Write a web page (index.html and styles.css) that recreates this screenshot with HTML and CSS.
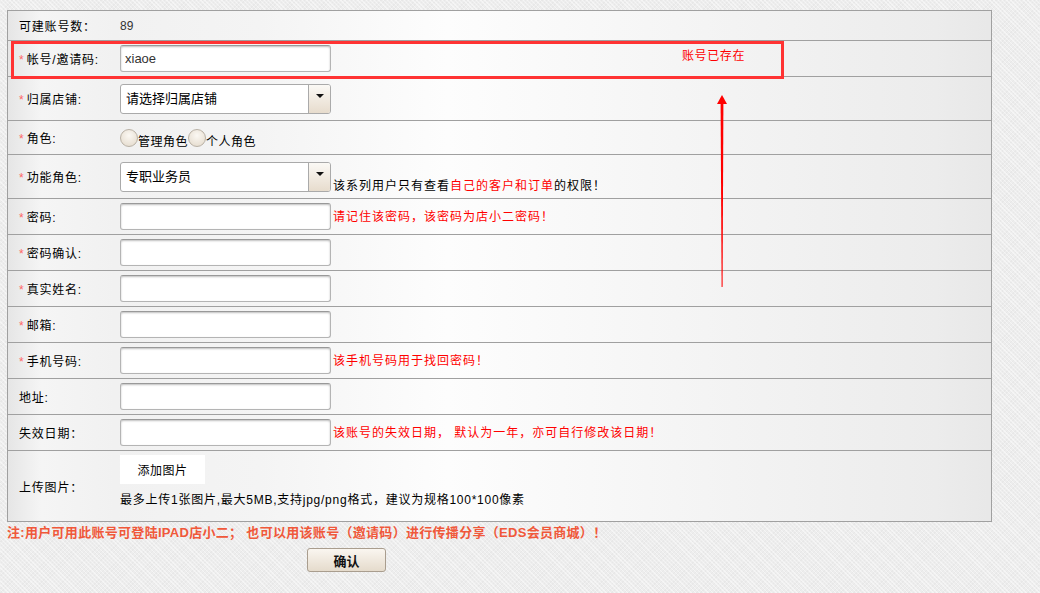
FILE: index.html
```html
<!DOCTYPE html>
<html>
<head>
    <title>新建账号</title>
    <meta charset="UTF-8">
    <link rel="stylesheet" href="styles.css">
</head>
<body>
    <div class="page">
        <table class="form-table">
            <tr class="row-first">
                <td class="label">可建账号数：</td>
                <td class="value"><span class="count">89</span></td>
            </tr>
            <tr class="row-md">
                <td class="label"><i class="req">*</i>帐号/邀请码:</td>
                <td class="value"><input class="text-input" type="text" value="xiaoe"></td>
            </tr>
            <tr class="row-lg">
                <td class="label"><i class="req">*</i>归属店铺:</td>
                <td class="value">
                    <div class="select">
                        <span class="select-text">请选择归属店铺</span>
                        <span class="select-btn"><i class="caret"></i></span>
                    </div>
                </td>
            </tr>
            <tr class="row-sm">
                <td class="label"><i class="req">*</i>角色:</td>
                <td class="value">
                    <div class="radios">
                        <span class="radio"></span><span class="radio-text">管理角色</span>
                        <span class="radio"></span><span class="radio-text">个人角色</span>
                    </div>
                </td>
            </tr>
            <tr class="row-lg">
                <td class="label"><i class="req">*</i>功能角色:</td>
                <td class="value">
                    <div class="field field-end">
                        <div class="select">
                            <span class="select-text">专职业务员</span>
                            <span class="select-btn"><i class="caret"></i></span>
                        </div>
                        <span class="hint hint-dark">该系列用户只有查看<em>自己的客户和订单</em>的权限！</span>
                    </div>
                </td>
            </tr>
            <tr class="row-md">
                <td class="label"><i class="req">*</i>密码:</td>
                <td class="value">
                    <div class="field">
                        <input class="text-input" type="password">
                        <span class="hint">请记住该密码，该密码为店小二密码！</span>
                    </div>
                </td>
            </tr>
            <tr class="row-md">
                <td class="label"><i class="req">*</i>密码确认:</td>
                <td class="value"><input class="text-input" type="password"></td>
            </tr>
            <tr class="row-md">
                <td class="label"><i class="req">*</i>真实姓名:</td>
                <td class="value"><input class="text-input" type="text"></td>
            </tr>
            <tr class="row-md">
                <td class="label"><i class="req">*</i>邮箱:</td>
                <td class="value"><input class="text-input" type="text"></td>
            </tr>
            <tr class="row-md">
                <td class="label"><i class="req">*</i>手机号码:</td>
                <td class="value">
                    <div class="field">
                        <input class="text-input" type="text">
                        <span class="hint">该手机号码用于找回密码！</span>
                    </div>
                </td>
            </tr>
            <tr class="row-md">
                <td class="label">地址:</td>
                <td class="value"><input class="text-input" type="text"></td>
            </tr>
            <tr class="row-md">
                <td class="label">失效日期：</td>
                <td class="value">
                    <div class="field">
                        <input class="text-input" type="text">
                        <span class="hint">该账号的失效日期， 默认为一年，亦可自行修改该日期！</span>
                    </div>
                </td>
            </tr>
            <tr class="row-upload">
                <td class="label">上传图片：</td>
                <td class="value value-top">
                    <button class="btn-add" type="button">添加图片</button>
                    <p class="upload-tip">最多上传1张图片,最大5MB,支持jpg/png格式，建议为规格100*100像素</p>
                </td>
            </tr>
        </table>

        <p class="note">注:用户可用此账号可登陆IPAD店小二； 也可以用该账号（邀请码）进行传播分享（EDS会员商城）！</p>
        <div class="actions">
            <button class="btn-confirm" type="button">确认</button>
        </div>

        <!-- annotation drawn over the form -->
        <div class="mark-box"></div>
        <span class="mark-text">账号已存在</span>
        <svg class="mark-arrow" width="12" height="195" viewBox="0 0 12 195">
            <polygon points="6,1 11,10 1,10" fill="#f00"/>
            <polygon points="4.6,9 7.4,9 6.6,193 5.6,193" fill="#f00"/>
        </svg>
    </div>
</body>
</html>
```

FILE: styles.css
```css
body {
    margin: 0;
    font-family: "Liberation Sans", "Noto Sans CJK SC", sans-serif;
    font-size: 12px;
    color: #000;
    background-color: #ededed;
    background-image:
        repeating-linear-gradient(45deg, rgba(255, 255, 255, 0.45) 0 1px, transparent 1px 3px),
        repeating-linear-gradient(-45deg, rgba(0, 0, 0, 0.025) 0 1px, transparent 1px 3px);
}
.page {
    position: relative;
    padding: 10px 0 26px 7px;
}
.form-table {
    width: 985px;
    border: 1px solid #a0a0a0;
    border-spacing: 0;
}
.form-table td {
    padding: 0;
    border-top: 1px solid #a0a0a0;
    vertical-align: middle;
    background: linear-gradient(to right, #e2e2e2 0, #f5f5f5 4%, #f1f1f1 11%, #f4f4f4 25%, #fdfdfd 43%, #f5f5f5 65%, #ececec 90%, #e4e4e4 100%);
    background-attachment: fixed;
}
.form-table tr:first-child td {
    border-top: none;
}
.row-first td { height: 29px; }
.row-md td { height: 35px; }
.row-lg td { height: 43px; }
.row-sm td { height: 33px; }
.row-upload td { height: 66px; }
.label {
    width: 101px;
    padding-left: 11px !important;
    letter-spacing: 0.8px;
    white-space: nowrap;
}
.req {
    font-style: normal;
    color: #f66;
    margin-right: 3px;
    letter-spacing: 0;
}
.count {
    color: #333;
}
.text-input {
    box-sizing: border-box;
    width: 211px;
    height: 27px;
    margin: 0;
    padding: 0 4px;
    border: 1px solid #b4b4b4;
    border-top-color: #999;
    border-radius: 3px;
    box-shadow: inset 0 1px 2px rgba(0, 0, 0, 0.25);
    background: #fff;
    font-family: "Liberation Sans", "Noto Sans CJK SC", sans-serif;
    font-size: 13px;
    color: #333;
    outline: none;
}
.select {
    box-sizing: border-box;
    display: flex;
    width: 211px;
    height: 30px;
    border: 1px solid #aaa;
    border-radius: 3px;
    background: #fff;
    overflow: hidden;
    flex-shrink: 0;
}
.select-text {
    flex: 1;
    padding: 5px 0 0 5px;
    font-size: 13px;
    line-height: 18px;
}
.select-btn {
    width: 22px;
    border-left: 1px solid #aaa;
    background: linear-gradient(#fbf9f5, #e7dccd);
    display: flex;
    justify-content: center;
    padding-top: 9px;
    box-sizing: border-box;
}
.caret {
    width: 0;
    height: 0;
    border-left: 4px solid transparent;
    border-right: 4px solid transparent;
    border-top: 4px solid #111;
}
.field {
    display: flex;
    align-items: center;
}
.field-end {
    align-items: flex-end;
}
.field-end .hint {
    margin-bottom: -1px;
}
.hint {
    margin-left: 2px;
    color: #f00;
    letter-spacing: 1px;
    line-height: 14px;
    white-space: nowrap;
}
.hint-dark {
    color: #000;
}
.hint em {
    font-style: normal;
    color: #f00;
}
.radios {
    display: flex;
    align-items: flex-end;
    padding-top: 2px;
}
.radio {
    box-sizing: border-box;
    width: 18px;
    height: 18px;
    border: 1px solid #b9b1a5;
    border-radius: 50%;
    background: radial-gradient(circle at 50% 35%, #fbf8f3, #e2d8c9);
    margin-bottom: 2px;
}
.radio-text {
    letter-spacing: 0.5px;
    line-height: 14px;
}
.value-top {
    vertical-align: top !important;
    padding-top: 4px !important;
}
.btn-add {
    display: block;
    width: 85px;
    height: 29px;
    margin: 0;
    padding: 0;
    border: none;
    background: #fff;
    font-family: "Liberation Sans", "Noto Sans CJK SC", sans-serif;
    font-size: 12px;
    letter-spacing: 0.5px;
    color: #000;
}
.upload-tip {
    margin: 8px 0 0;
    line-height: 16px;
    letter-spacing: 0.75px;
}
.note {
    margin: 1px 0 0;
    font-size: 13px;
    font-weight: bold;
    line-height: 20px;
    letter-spacing: 0.3px;
    color: #f0583a;
}
.actions {
    margin-top: 5px;
    padding-left: 300px;
}
.btn-confirm {
    width: 79px;
    height: 24px;
    padding: 0;
    border: 1px solid #a99d8e;
    border-radius: 3px;
    background: linear-gradient(#faf6f0, #e5dbcc);
    font-family: "Liberation Sans", "Noto Sans CJK SC", sans-serif;
    font-size: 13px;
    font-weight: bold;
    color: #111;
}
.mark-box {
    position: absolute;
    left: 11px;
    top: 41px;
    width: 767px;
    height: 32px;
    border: 3px solid #f33;
}
.mark-text {
    position: absolute;
    left: 682px;
    top: 48px;
    color: #f00;
    letter-spacing: 0.6px;
    line-height: 16px;
}
.mark-arrow {
    position: absolute;
    left: 716px;
    top: 94px;
}
```
